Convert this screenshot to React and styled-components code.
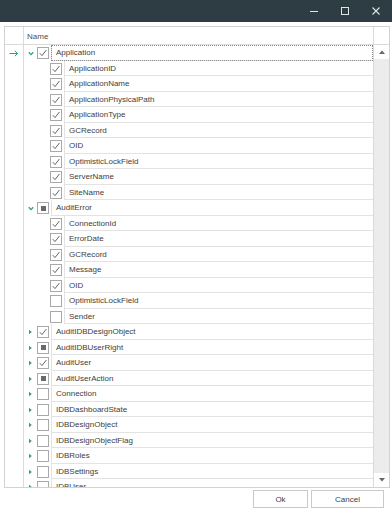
import React from 'react';
import styled, { createGlobalStyle } from 'styled-components';

const GlobalStyle = createGlobalStyle`
  html, body { margin: 0; padding: 0; background: #ffffff; }
  body { font-family: "Liberation Sans", Arial, sans-serif; }
`;

const Window = styled.div`
  width: 392px;
  height: 511px;
  display: flex;
  flex-direction: column;
  background: #ffffff;
  overflow: hidden;
`;

const TitleBar = styled.div`
  height: 22px;
  flex: none;
  background: #2e3d44;
  display: flex;
  justify-content: flex-end;
  align-items: center;
  padding-right: 1px;
`;

const TitleButton = styled.div`
  width: 31px;
  height: 22px;
  display: flex;
  align-items: center;
  justify-content: center;
`;

const Content = styled.div`
  flex: 1;
  display: flex;
  flex-direction: column;
  padding: 4px 2px 0 4px;
  min-height: 0;
`;

const Grid = styled.div`
  height: 462px;
  box-sizing: border-box;
  border: 1px solid #d2d2d2;
  display: flex;
  flex-direction: column;
  font-size: 8px;
  color: #404040;
`;

const Header = styled.div`
  height: 18px;
  flex: none;
  box-sizing: border-box;
  border-bottom: 1px solid #dadada;
  display: flex;
`;

const HeaderIndicator = styled.div`
  width: 19px;
  box-sizing: border-box;
  border-right: 1px solid #dadada;
`;

const HeaderName = styled.div`
  flex: 1;
  display: flex;
  align-items: center;
  padding: 1px 0 0 3px;
  color: #505050;
`;

const HeaderScroll = styled.div`
  width: 16px;
  box-sizing: border-box;
  border-left: 1px solid #dadada;
`;

const Body = styled.div`
  flex: 1;
  display: flex;
  min-height: 0;
`;

const RowsArea = styled.div`
  flex: 1;
  overflow: hidden;
  display: flex;
  flex-direction: column;
`;

const Row = styled.div`
  height: 15.5px;
  flex: none;
  display: flex;
  align-items: stretch;
`;

const Indicator = styled.div`
  width: 19px;
  flex: none;
  box-sizing: border-box;
  border-right: 1px solid #dadada;
  display: flex;
  align-items: center;
  justify-content: center;
  padding-top: 1px;
`;

const Indent = styled.div`
  width: ${(p) => (p.$level === 0 ? 0 : 26)}px;
  flex: none;
`;

const Expander = styled.div`
  width: 13px;
  flex: none;
  display: flex;
  align-items: center;
  justify-content: center;
  padding-top: 1px;
`;

const CheckSlot = styled.div`
  width: 14px;
  flex: none;
  display: flex;
  align-items: center;
  padding-top: 1px;
`;

const Box = styled.div`
  width: 12px;
  height: 12px;
  box-sizing: border-box;
  border: 1px solid #a9a9a9;
  background: #fff;
  display: flex;
  align-items: center;
  justify-content: center;
`;

const Partial = styled.div`
  width: 5px;
  height: 5px;
  background: #6a6a6a;
`;

const Cell = styled.div`
  flex: 1;
  box-sizing: border-box;
  border-left: 1px solid #e3e3e3;
  border-bottom: 1px solid #e3e3e3;
  display: flex;
  align-items: center;
  padding: 1px 0 0 4px;
  white-space: nowrap;
  outline: ${(p) => (p.$focused ? '1px dotted #8a8a8a' : 'none')};
  outline-offset: -1px;
`;

const Scrollbar = styled.div`
  width: 16px;
  flex: none;
  box-sizing: border-box;
  border-left: 1px solid #dadada;
  display: flex;
  flex-direction: column;
  background: #ffffff;
`;

const ScrollArrow = styled.div`
  height: 14px;
  flex: none;
  display: flex;
  align-items: center;
  justify-content: center;
`;

const ScrollThumb = styled.div`
  flex: 1;
  background: #ececec;
`;

const Footer = styled.div`
  height: 23px;
  flex: none;
  display: flex;
  justify-content: flex-end;
  align-items: flex-start;
  gap: 3px;
  padding: 2px 6px 0 0;
`;

const Button = styled.div`
  width: ${(p) => p.$w}px;
  height: 18px;
  box-sizing: border-box;
  border: 1px solid #c9c9c9;
  background: #fff;
  display: flex;
  align-items: center;
  justify-content: center;
  font-size: 8px;
  color: #404040;
`;

const GREEN = '#27a27c';

const ExpandedIcon = () => (
  <svg width="6" height="5" viewBox="0 0 6 5">
    <path d="M0.8 1.2 L3 3.6 L5.2 1.2" fill="none" stroke={GREEN} strokeWidth="1.3" />
  </svg>
);

const CollapsedIcon = () => (
  <svg width="5" height="6" viewBox="0 0 5 6">
    <path d="M1 0.8 L3.8 3 L1 5.2 Z" fill={GREEN} />
  </svg>
);

const FocusArrow = () => (
  <svg width="10" height="7" viewBox="0 0 10 7">
    <path d="M0.5 3.5 H8.5 M5.8 0.8 L8.6 3.5 L5.8 6.2" fill="none" stroke={GREEN} strokeWidth="1" />
  </svg>
);

const CheckMark = () => (
  <svg width="10" height="10" viewBox="0 0 10 10">
    <path d="M1.8 5.2 L4 7.6 L8.4 2" fill="none" stroke="#555" strokeWidth="0.9" />
  </svg>
);

const CheckBox = ({ state }) => (
  <Box>
    {state === 'checked' && <CheckMark />}
    {state === 'partial' && <Partial />}
  </Box>
);

const rows = [
  { level: 0, name: 'Application', exp: 'open', check: 'checked', focused: true },
  ...['ApplicationID', 'ApplicationName', 'ApplicationPhysicalPath', 'ApplicationType', 'GCRecord', 'OID', 'OptimisticLockField', 'ServerName', 'SiteName'].map((n) => ({ level: 1, name: n, check: 'checked' })),
  { level: 0, name: 'AuditError', exp: 'open', check: 'partial' },
  ...['ConnectionId', 'ErrorDate', 'GCRecord', 'Message', 'OID'].map((n) => ({ level: 1, name: n, check: 'checked' })),
  { level: 1, name: 'OptimisticLockField', check: 'none' },
  { level: 1, name: 'Sender', check: 'none' },
  { level: 0, name: 'AuditIDBDesignObject', exp: 'closed', check: 'checked' },
  { level: 0, name: 'AuditIDBUserRight', exp: 'closed', check: 'partial' },
  { level: 0, name: 'AuditUser', exp: 'closed', check: 'checked' },
  { level: 0, name: 'AuditUserAction', exp: 'closed', check: 'partial' },
  ...['Connection', 'IDBDashboardState', 'IDBDesignObject', 'IDBDesignObjectFlag', 'IDBRoles', 'IDBSettings', 'IDBUser'].map((n) => ({ level: 0, name: n, exp: 'closed', check: 'none' })),
];

export default function App() {
  return (
    <>
      <GlobalStyle />
      <Window>
        <TitleBar>
          <TitleButton>
            <svg width="10" height="10" viewBox="0 0 10 10">
              <path d="M1 5.5 H9" stroke="#dfe4e6" strokeWidth="1" />
            </svg>
          </TitleButton>
          <TitleButton>
            <svg width="10" height="10" viewBox="0 0 10 10">
              <rect x="1.5" y="1.5" width="7" height="7" fill="none" stroke="#dfe4e6" strokeWidth="1" />
            </svg>
          </TitleButton>
          <TitleButton>
            <svg width="10" height="10" viewBox="0 0 10 10">
              <path d="M1.5 1.5 L8.5 8.5 M8.5 1.5 L1.5 8.5" stroke="#dfe4e6" strokeWidth="1.1" />
            </svg>
          </TitleButton>
        </TitleBar>
        <Content>
          <Grid>
            <Header>
              <HeaderIndicator />
              <HeaderName>Name</HeaderName>
              <HeaderScroll />
            </Header>
            <Body>
              <RowsArea>
                {rows.map((r, i) => (
                  <Row key={i}>
                    <Indicator>{r.focused && <FocusArrow />}</Indicator>
                    <Indent $level={r.level} />
                    {r.level === 0 && (
                      <Expander>
                        {r.exp === 'open' ? <ExpandedIcon /> : <CollapsedIcon />}
                      </Expander>
                    )}
                    <CheckSlot>
                      <CheckBox state={r.check} />
                    </CheckSlot>
                    <Cell $focused={r.focused}>{r.name}</Cell>
                  </Row>
                ))}
              </RowsArea>
              <Scrollbar>
                <ScrollArrow>
                  <svg width="6" height="4" viewBox="0 0 6 4">
                    <path d="M0 4 L3 0.5 L6 4 Z" fill="#666" />
                  </svg>
                </ScrollArrow>
                <ScrollThumb />
                <ScrollArrow>
                  <svg width="6" height="4" viewBox="0 0 6 4">
                    <path d="M0 0 L3 3.5 L6 0 Z" fill="#666" />
                  </svg>
                </ScrollArrow>
              </Scrollbar>
            </Body>
          </Grid>
          <Footer>
            <Button $w={55}>Ok</Button>
            <Button $w={73}>Cancel</Button>
          </Footer>
        </Content>
      </Window>
    </>
  );
}
